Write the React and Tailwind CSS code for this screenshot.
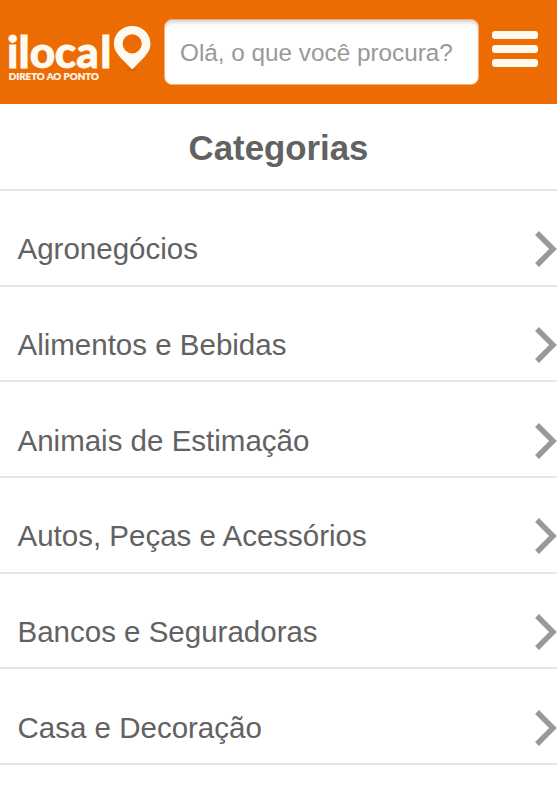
import React from 'react';

const categories = [
  'Agronegócios',
  'Alimentos e Bebidas',
  'Animais de Estimação',
  'Autos, Peças e Acessórios',
  'Bancos e Seguradoras',
  'Casa e Decoração',
];

const Logo = () => (
  <svg width="146" height="64" viewBox="0 0 146 64" className="shrink-0" fill="#fffaf0">
    <text x="2 13.500 24.700 49.800 71.300 95.300" y="47.700" fontFamily="Lato, sans-serif" fontWeight="900" fontSize="44" stroke="#fffaf0" strokeWidth="0.800">ilocal</text>
    <text x="3.800" y="60" fontFamily="Lato, sans-serif" fontWeight="900" fontSize="9.500" stroke="#fffaf0" strokeWidth="0.200" textLength="90" lengthAdjust="spacingAndGlyphs">DIRETO AO PONTO</text>
    <ellipse cx="127" cy="49.5" rx="6" ry="1.5" fill="#c95a08" opacity="0.5" />
    <path fillRule="evenodd" d="M127.200 6c-10.200 0-18.300 7.800-18.300 17.600 0 5.600 2.600 9.400 6.300 13.600L127.200 49.500l12-12.300c3.700-4.200 6.300-8 6.300-13.600C145.500 13.800 137.400 6 127.200 6zm0 8.200a9.600 9.600 0 1 1 0 19.200 9.600 9.600 0 0 1 0-19.200z" />
  </svg>
);

const Header = () => (
  <header className="h-[104px] bg-[#ec6b02] flex items-start pl-[5px] pt-5">
    <Logo />
    <input
      type="text"
      placeholder="Olá, o que você procura?"
      className="-mt-px ml-[13px] w-[315px] h-[66px] shrink-0 rounded-lg border border-[#f5ad74] bg-white pl-[15px] pt-[2px] text-[24.300px] text-gray-600 placeholder:text-[#999] shadow-[inset_0_4px_4px_-2px_#ccc] outline-none"
    />
    <button aria-label="Menu" className="ml-[13px] mt-[11px] w-[46px] flex flex-col gap-[6px]">
      <span className="h-2 w-full rounded-[3px] bg-[#fffaf0]" />
      <span className="h-2 w-full rounded-[3px] bg-[#fffaf0]" />
      <span className="h-2 w-full rounded-[3px] bg-[#fffaf0]" />
    </button>
  </header>
);

const CategoryRow = ({ name }) => (
  <li className="h-[95.700px] flex items-end justify-between border-b-2 border-[#e6e6e6] pl-[17.500px]">
    <span className="pb-[15.300px] text-[29.500px] leading-[40px]">{name}</span>
    <svg width="23" height="38" viewBox="0 0 23 38" fill="none" className="mb-[16.500px] shrink-0">
      <path d="M3 3L19 19L3 35" stroke="#999" strokeWidth="5.500" />
    </svg>
  </li>
);

const App = () => {
  return (
    <div className="h-[800px] overflow-hidden bg-white text-[#626262] font-['Liberation_Sans',Arial,sans-serif]">
      <Header />
      <h1 className="h-[87px] border-b-2 border-[#e6e6e6] text-center text-[34.800px] leading-[88px] font-bold">Categorias</h1>
      <ul>
        {categories.map((name) => (
          <CategoryRow key={name} name={name} />
        ))}
      </ul>
    </div>
  );
};

export default App;
